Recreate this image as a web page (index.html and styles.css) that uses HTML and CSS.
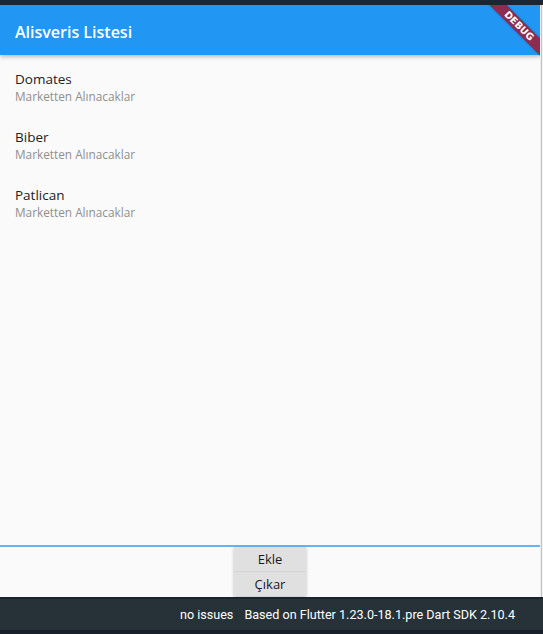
FILE: index.html
```html
<!DOCTYPE html>
<html>
<head>
<meta charset="utf-8">
<link rel="stylesheet" href="styles.css">
</head>
<body>
<div class="topbar"></div>
<div class="main">
  <div class="app">
    <header class="appbar"><h1 class="title">Alisveris Listesi</h1></header>
    <ul class="list">
      <li class="tile"><div class="t1">Domates</div><div class="t2">Marketten Alınacaklar</div></li>
      <li class="tile"><div class="t1">Biber</div><div class="t2">Marketten Alınacaklar</div></li>
      <li class="tile"><div class="t1">Patlican</div><div class="t2">Marketten Alınacaklar</div></li>
    </ul>
    <div class="bottom">
      <div class="btns">
        <button class="btn">Ekle</button>
        <button class="btn">Çıkar</button>
      </div>
    </div>
    <div class="banner">DEBUG</div>
  </div>
  <div class="edge"></div>
</div>
<footer class="status">
  <span>no issues</span>
  <span>Based on Flutter 1.23.0-18.1.pre Dart SDK 2.10.4</span>
</footer>
</body>
</html>
```

FILE: styles.css
```css
html, body { margin: 0; padding: 0; }
body {
  width: 543px;
  height: 634px;
  overflow: hidden;
  background: #fafafa;
  font-family: "Open Sans", "Noto Sans", sans-serif;
}
.topbar { height: 5px; background: #1c2532; }
.main { display: flex; height: 592px; }
.app {
  position: relative;
  width: 540px;
  display: flex;
  flex-direction: column;
  overflow: hidden;
  background: #fafafa;
}
.edge {
  width: 3px;
  background: linear-gradient(to right, #ececec 0 1px, #c4c4c4 1px 2px, #f2f2f2 2px 3px);
}
.appbar {
  height: 50px;
  box-sizing: border-box;
  flex: none;
  background: #2196f3;
  display: flex;
  align-items: center;
  padding: 3px 0 0 15px;
  box-shadow: 0 2px 4px rgba(0,0,0,0.25);
  position: relative;
  z-index: 1;
}
.title {
  margin: 0;
  color: #fff;
  font-size: 16px;
  font-weight: 600;
}
.list { list-style: none; margin: 0; padding: 15px 0 0; flex: 1; }
.tile {
  height: 58px;
  padding-left: 15px;
  box-sizing: border-box;
}
.t1 { font-size: 13.5px; color: #222; line-height: 18px; height: 18px; }
.t2 { font-size: 11.8px; color: #8f8f8f; line-height: 16px; height: 16px; }
.bottom {
  height: 52px;
  box-sizing: border-box;
  flex: none;
  border-top: 2px solid #64b5f6;
  background: #fafafa;
  display: flex;
  justify-content: center;
}
.btns {
  width: 72px;
  display: flex;
  flex-direction: column;
  align-self: flex-start;
  box-shadow: 0 1px 3px rgba(0,0,0,0.25);
}
.btn {
  height: 24px;
  border: 0;
  padding: 0;
  background: #e0e0e0;
  font-family: "Open Sans", "Noto Sans", sans-serif;
  font-size: 13px;
  color: #1a1a1a;
}
.btn + .btn { border-top: 1px solid #d3d3d3; height: 25px; }
.banner {
  position: absolute;
  left: 477px;
  top: 15px;
  width: 84px;
  height: 12px;
  line-height: 12px;
  background: #8b2c50;
  color: #fff;
  font-family: "DejaVu Sans", sans-serif;
  font-weight: 700;
  font-size: 9.5px;
  text-align: center;
  transform: rotate(45deg);
  z-index: 2;
  box-shadow: 0 0 2px rgba(0,0,0,0.3);
}
.status {
  height: 37px;
  box-sizing: border-box;
  background: #263238;
  border-top: 2px solid #1a2430;
  border-bottom: 4px solid #18202b;
  display: flex;
  justify-content: flex-end;
  align-items: center;
  gap: 11px;
  padding-right: 28px;
  color: #fff;
  font-family: Roboto, sans-serif;
  font-size: 12.6px;
}
```
